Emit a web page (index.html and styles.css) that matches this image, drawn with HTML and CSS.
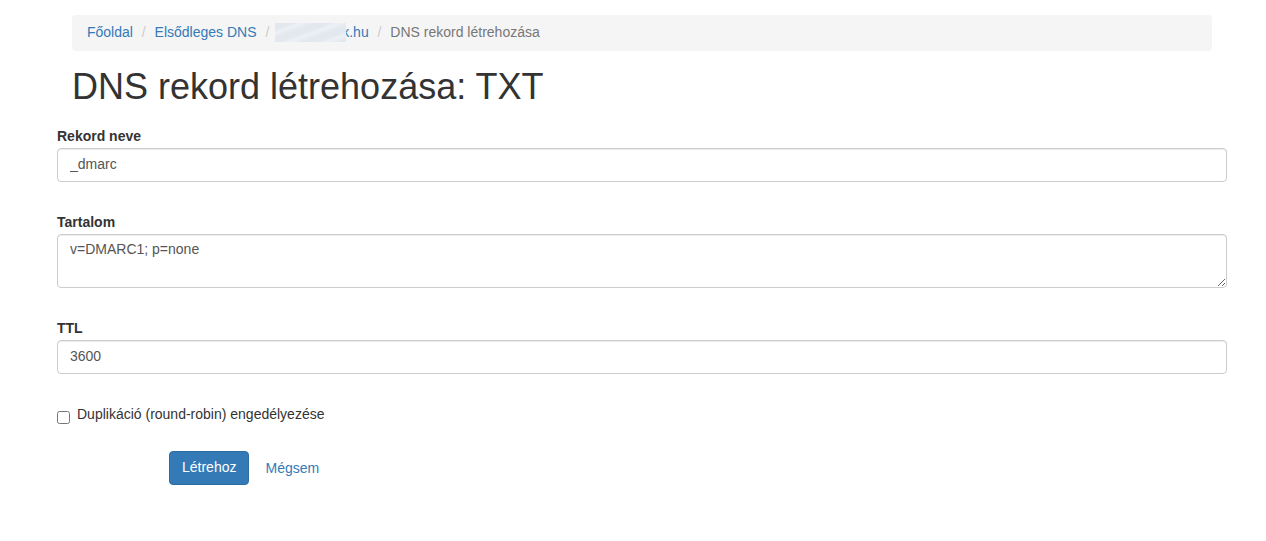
FILE: index.html
```html
<!DOCTYPE html>
<html lang="hu">
<head>
    <meta charset="UTF-8">
    <meta name="viewport" content="width=device-width, initial-scale=1.0">
    <title>DNS rekord létrehozása</title>
    <link rel="stylesheet" href="styles.css">
</head>
<body>
    <div class="page">
        <ol class="breadcrumb">
            <li><a href="#">Főoldal</a></li>
            <li><a href="#">Elsődleges DNS</a></li>
            <li><a href="#"><span class="redacted"></span>k.hu</a></li>
            <li class="active">DNS rekord létrehozása</li>
        </ol>

        <h1 class="title">DNS rekord létrehozása: TXT</h1>

        <form class="record-form">
            <div class="form-group">
                <label for="name">Rekord neve</label>
                <input id="name" class="form-control" type="text" value="_dmarc">
            </div>

            <div class="form-group">
                <label for="content">Tartalom</label>
                <textarea id="content" class="form-control area">v=DMARC1; p=none</textarea>
            </div>

            <div class="form-group">
                <label for="ttl">TTL</label>
                <input id="ttl" class="form-control" type="text" value="3600">
            </div>

            <div class="checkbox">
                <label><input type="checkbox"> Duplikáció (round-robin) engedélyezése</label>
            </div>

            <div class="actions">
                <button type="button" class="btn">Létrehoz</button>
                <a href="#" class="cancel">Mégsem</a>
            </div>
        </form>
    </div>
</body>
</html>
```

FILE: styles.css
```css
*{
    box-sizing: border-box;
}

body{
    margin: 0;
    font-family: "Liberation Sans", Arial, sans-serif;
    font-size: 14px;
    line-height: 20px;
    color: #333;
    background: #fff;
}

a{
    color: #337ab7;
    text-decoration: none;
}

.page{
    width: 1170px;
    margin-left: 57px;
    padding-top: 15px;
}

/* breadcrumb */
.breadcrumb{
    list-style: none;
    margin: 0 15px;
    padding: 7px 15px 9px;
    background-color: #f5f5f5;
    border-radius: 4px;
}

.breadcrumb li{
    display: inline-block;
}

.breadcrumb li + li::before{
    content: "/\00a0";
    padding: 0 5px;
    color: #ccc;
}

.breadcrumb .active{
    color: #777;
}

.redacted{
    position: relative;
    z-index: 1;
    display: inline-block;
    vertical-align: -5px;
    width: 71px;
    height: 19px;
    margin-left: -3px;
    margin-right: -4px;
    background: repeating-linear-gradient(160deg, #e3e8ef 0, #e3e8ef 6px, #edf0f5 9px, #e6eaf1 13px);
}

.title{
    margin: 16px 15px 19px;
    font-size: 36px;
    font-weight: 400;
    line-height: 40px;
}

/* form */
.form-group{
    margin-bottom: 30px;
}

.form-group label{
    display: block;
    margin-bottom: 2px;
    font-weight: 700;
}

.form-control{
    display: block;
    width: 100%;
    height: 34px;
    padding: 5px 12px 7px;
    font-family: inherit;
    font-size: 14px;
    line-height: 20px;
    color: #555;
    background: #fff;
    border: 1px solid #ccc;
    border-radius: 4px;
    box-shadow: inset 0 1px 1px rgba(0,0,0,.075);
}

.area{
    height: 54px;
    padding-top: 4px;
    resize: vertical;
}

.checkbox label{
    display: flex;
    align-items: flex-start;
}

.checkbox input{
    width: 13px;
    height: 13px;
    margin: 7px 7px 0 0;
}

.actions{
    display: flex;
    align-items: center;
    margin-top: 27px;
    padding-left: 112px;
}

.btn{
    height: 34px;
    padding: 5px 12px 7px;
    font-family: inherit;
    font-size: 14px;
    line-height: 20px;
    color: #fff;
    background-color: #337ab7;
    border: 1px solid #2e6da4;
    border-radius: 4px;
    cursor: pointer;
}

.cancel{
    margin-left: 16px;
}
```
